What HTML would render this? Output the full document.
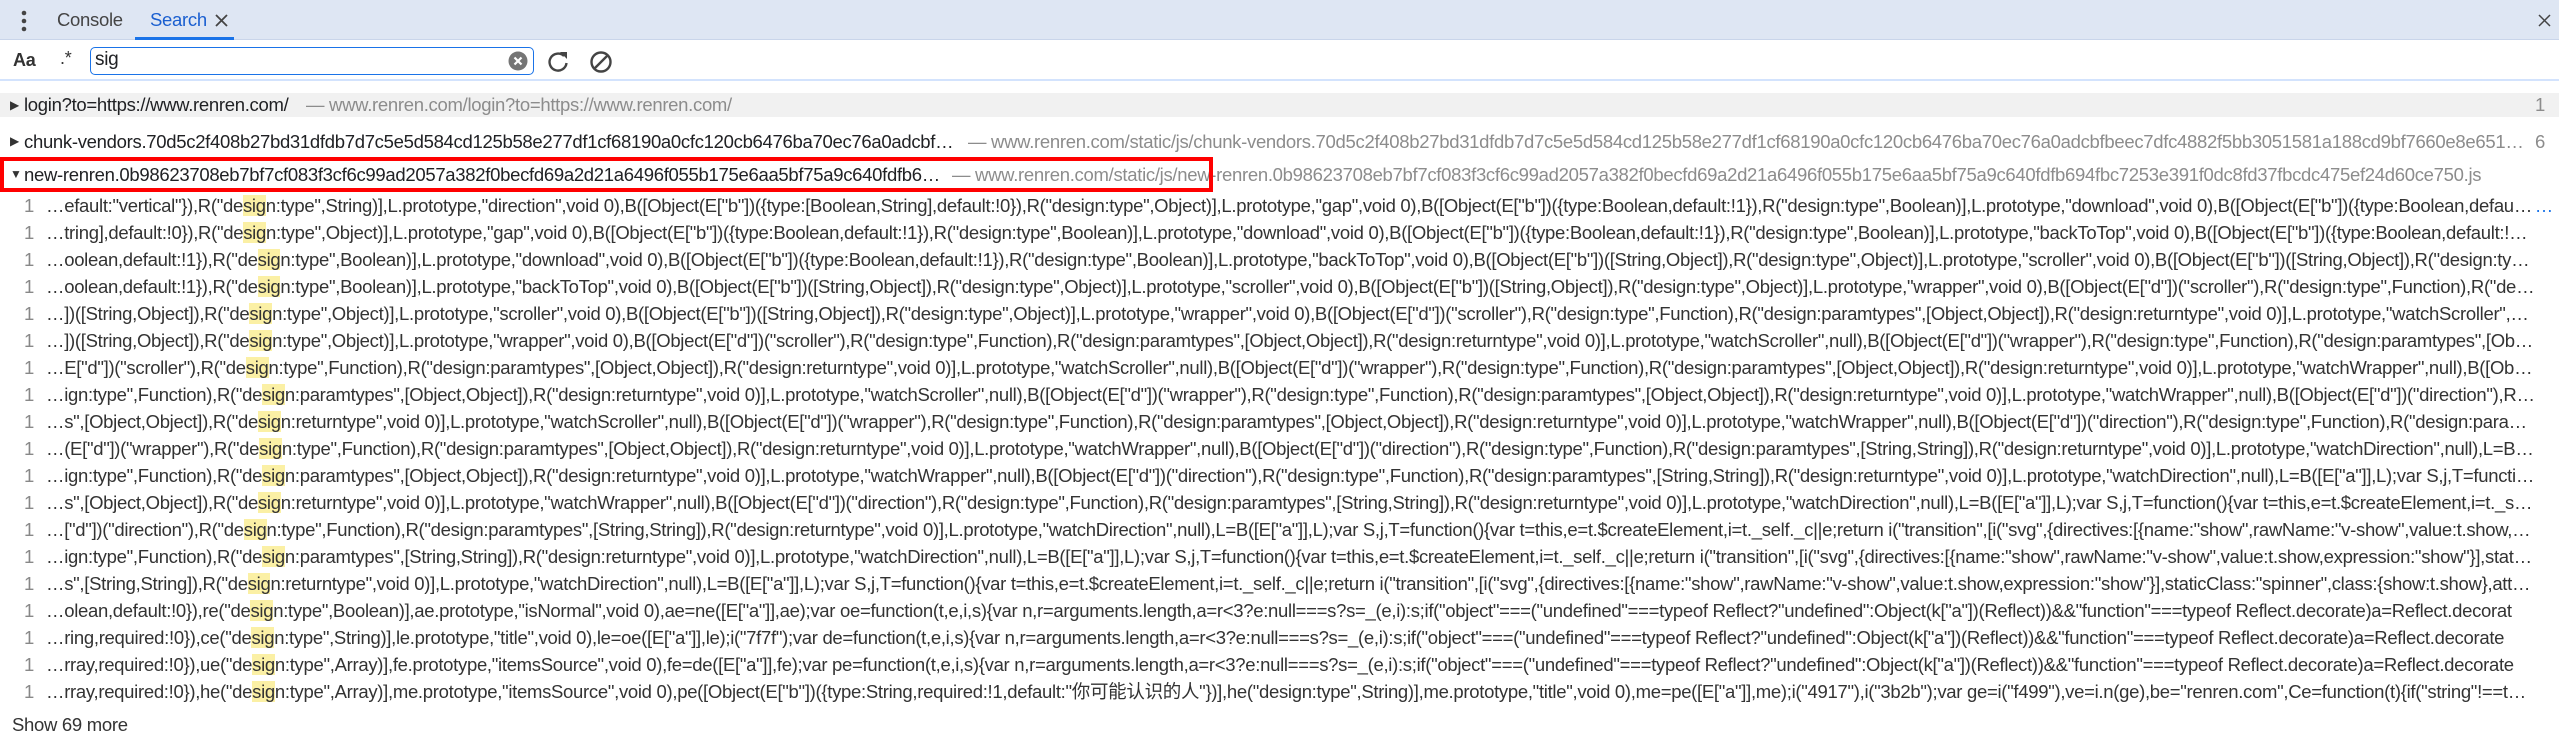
<!DOCTYPE html>
<html><head><meta charset="utf-8"><style>
*{margin:0;padding:0;box-sizing:border-box}
body{width:2559px;height:748px;overflow:hidden;background:#fff;font-family:"Liberation Sans",Arial,sans-serif;color:#202124;position:relative;letter-spacing:-0.3px}
.tabbar{position:absolute;left:0;top:0;width:2559px;height:40px;background:#dee6f3;border-bottom:1px solid #c9d5ea}
.tab{position:absolute;top:9px;font-size:18.5px;color:#444}
.sbar{position:absolute;left:0;top:40px;width:2559px;height:41px;border-bottom:2px solid #d3e3fd}
.input{position:absolute;left:90px;top:47px;width:444px;height:28px;border:1.5px solid #1a73e8;border-radius:5px;font-size:19px;padding:1px 0 0 4px}
.row{position:absolute;left:0;width:2559px;height:27px;white-space:nowrap;overflow:hidden;font-size:18.5px;line-height:27px}
.tri{position:absolute;left:10px;top:0;font-size:12px;color:#333}
.nm{position:absolute;left:24px;top:0;overflow:hidden;text-overflow:ellipsis;white-space:nowrap}
.url{position:absolute;top:0;color:#8c8c8c;overflow:hidden;text-overflow:ellipsis;white-space:nowrap}
.cnt{position:absolute;right:14px;top:0;color:#8c8c8c}
.ln{position:absolute;left:24px;color:#888}
.code{position:absolute;left:46px;right:24px;overflow:hidden;text-overflow:ellipsis;color:#333}
.code b{font-weight:normal;background:#fbf0a5}
.dots{position:absolute;right:6px;top:0;color:#1a73e8}
</style></head><body>
<div class="tabbar">
 <svg style="position:absolute;left:20px;top:10px" width="8" height="22"><circle cx="4" cy="3" r="2.3" fill="#444"/><circle cx="4" cy="11" r="2.3" fill="#444"/><circle cx="4" cy="19" r="2.3" fill="#444"/></svg>
 <div class="tab" style="left:57px">Console</div>
 <div class="tab" style="left:150px;color:#1a5fd0">Search</div>
 <div style="position:absolute;left:135px;top:37px;width:99px;height:3px;background:#1a73e8"></div>
 <svg style="position:absolute;left:215px;top:14px" width="13" height="13"><path d="M1 1L12 12M12 1L1 12" stroke="#444" stroke-width="1.8"/></svg>
 <svg style="position:absolute;left:2538px;top:14px" width="13" height="13"><path d="M1 1L12 12M12 1L1 12" stroke="#444" stroke-width="1.5"/></svg>
</div>
<div class="sbar">
 <div style="position:absolute;left:13px;top:10px;font-size:18px;font-weight:bold;color:#333">Aa</div>
 <div style="position:absolute;left:60px;top:8px;font-size:18px;color:#333">.*</div>
</div>
<div class="input">sig
 <svg style="position:absolute;right:5px;top:3px" width="20" height="20"><circle cx="10" cy="10" r="9.5" fill="#757575"/><path d="M6.5 6.5L13.5 13.5M13.5 6.5L6.5 13.5" stroke="#fff" stroke-width="2.2"/></svg>
</div>
<svg style="position:absolute;left:547px;top:49px" width="24" height="26"><path d="M17 7A8.5 8.5 0 1 0 19.5 14" fill="none" stroke="#444" stroke-width="2.4"/><path d="M13 3L20 3L20 10Z" fill="#444"/></svg>
<svg style="position:absolute;left:589px;top:50px" width="24" height="24"><circle cx="12" cy="12" r="9.5" fill="none" stroke="#444" stroke-width="2.4"/><path d="M18.5 5.5L5.5 18.5" stroke="#444" stroke-width="2.4"/></svg>

<div class="row" style="top:93px;height:24px;line-height:24px;background:#f1f1f1"><span class="tri">&#9654;</span><span class="nm" style="width:280px">login?to=https://www.renren.com/</span><span class="url" style="left:306px;width:700px">— www.renren.com/login?to=https://www.renren.com/</span><span class="cnt">1</span></div>
<div class="row" style="top:128px"><span class="tri">&#9654;</span><span class="nm" style="width:936px">chunk-vendors.70d5c2f408b27bd31dfdb7d7c5e5d584cd125b58e277df1cf68190a0cfc120cb6476ba70ec76a0adcbfbeec7dfc4882f5bb3051581a188</span><span class="url" style="left:968px;width:1560px">— www.renren.com/static/js/chunk-vendors.70d5c2f408b27bd31dfdb7d7c5e5d584cd125b58e277df1cf68190a0cfc120cb6476ba70ec76a0adcbfbeec7dfc4882f5bb3051581a188cd9bf7660e8e651b4c8a9d0e1f2a3b4c5d6e7f8</span><span class="cnt">6</span></div>
<div class="row" style="top:161px"><span class="tri">&#9660;</span><span class="nm" style="width:920px">new-renren.0b98623708eb7bf7cf083f3cf6c99ad2057a382f0becfd69a2d21a6496f055b175e6aa5bf75a9c640fdfb694fbc7253e391f0dc8fd37fbcdc475ef24d60ce750.js</span><span class="url" style="left:952px;width:1560px">— www.renren.com/static/js/new-renren.0b98623708eb7bf7cf083f3cf6c99ad2057a382f0becfd69a2d21a6496f055b175e6aa5bf75a9c640fdfb694fbc7253e391f0dc8fd37fbcdc475ef24d60ce750.js</span></div>
<div style="position:absolute;left:0;top:157px;width:1213px;height:35px;border:4px solid #f00"></div>

<div class="row" style="top:192px"><span class="ln">1</span><span class="code">…efault:"vertical"}),R("de<b>sig</b>n:type",String)],L.prototype,"direction",void 0),B([Object(E["b"])({type:[Boolean,String],default:!0}),R("design:type",Object)],L.prototype,"gap",void 0),B([Object(E["b"])({type:Boolean,default:!1}),R("design:type",Boolean)],L.prototype,"download",void 0),B([Object(E["b"])({type:Boolean,default:!1}),R("design:type",Boolean)]</span><span class="dots">…</span></div>
<div class="row" style="top:219px"><span class="ln">1</span><span class="code">…tring],default:!0}),R("de<b>sig</b>n:type",Object)],L.prototype,"gap",void 0),B([Object(E["b"])({type:Boolean,default:!1}),R("design:type",Boolean)],L.prototype,"download",void 0),B([Object(E["b"])({type:Boolean,default:!1}),R("design:type",Boolean)],L.prototype,"backToTop",void 0),B([Object(E["b"])({type:Boolean,default:!1}),R("design:type",Boolean)]</span></div>
<div class="row" style="top:246px"><span class="ln">1</span><span class="code">…oolean,default:!1}),R("de<b>sig</b>n:type",Boolean)],L.prototype,"download",void 0),B([Object(E["b"])({type:Boolean,default:!1}),R("design:type",Boolean)],L.prototype,"backToTop",void 0),B([Object(E["b"])([String,Object]),R("design:type",Object)],L.prototype,"scroller",void 0),B([Object(E["b"])([String,Object]),R("design:type",Object)]</span></div>
<div class="row" style="top:273px"><span class="ln">1</span><span class="code">…oolean,default:!1}),R("de<b>sig</b>n:type",Boolean)],L.prototype,"backToTop",void 0),B([Object(E["b"])([String,Object]),R("design:type",Object)],L.prototype,"scroller",void 0),B([Object(E["b"])([String,Object]),R("design:type",Object)],L.prototype,"wrapper",void 0),B([Object(E["d"])("scroller"),R("design:type",Function),R("design:paramtypes"</span></div>
<div class="row" style="top:300px"><span class="ln">1</span><span class="code">…])([String,Object]),R("de<b>sig</b>n:type",Object)],L.prototype,"scroller",void 0),B([Object(E["b"])([String,Object]),R("design:type",Object)],L.prototype,"wrapper",void 0),B([Object(E["d"])("scroller"),R("design:type",Function),R("design:paramtypes",[Object,Object]),R("design:returntype",void 0)],L.prototype,"watchScroller",null),B</span></div>
<div class="row" style="top:327px"><span class="ln">1</span><span class="code">…])([String,Object]),R("de<b>sig</b>n:type",Object)],L.prototype,"wrapper",void 0),B([Object(E["d"])("scroller"),R("design:type",Function),R("design:paramtypes",[Object,Object]),R("design:returntype",void 0)],L.prototype,"watchScroller",null),B([Object(E["d"])("wrapper"),R("design:type",Function),R("design:paramtypes",[Object,Object])</span></div>
<div class="row" style="top:354px"><span class="ln">1</span><span class="code">…E["d"])("scroller"),R("de<b>sig</b>n:type",Function),R("design:paramtypes",[Object,Object]),R("design:returntype",void 0)],L.prototype,"watchScroller",null),B([Object(E["d"])("wrapper"),R("design:type",Function),R("design:paramtypes",[Object,Object]),R("design:returntype",void 0)],L.prototype,"watchWrapper",null),B([Object(E["d"])</span></div>
<div class="row" style="top:381px"><span class="ln">1</span><span class="code">…ign:type",Function),R("de<b>sig</b>n:paramtypes",[Object,Object]),R("design:returntype",void 0)],L.prototype,"watchScroller",null),B([Object(E["d"])("wrapper"),R("design:type",Function),R("design:paramtypes",[Object,Object]),R("design:returntype",void 0)],L.prototype,"watchWrapper",null),B([Object(E["d"])("direction"),R("design:type"</span></div>
<div class="row" style="top:408px"><span class="ln">1</span><span class="code">…s",[Object,Object]),R("de<b>sig</b>n:returntype",void 0)],L.prototype,"watchScroller",null),B([Object(E["d"])("wrapper"),R("design:type",Function),R("design:paramtypes",[Object,Object]),R("design:returntype",void 0)],L.prototype,"watchWrapper",null),B([Object(E["d"])("direction"),R("design:type",Function),R("design:paramtypes"</span></div>
<div class="row" style="top:435px"><span class="ln">1</span><span class="code">…(E["d"])("wrapper"),R("de<b>sig</b>n:type",Function),R("design:paramtypes",[Object,Object]),R("design:returntype",void 0)],L.prototype,"watchWrapper",null),B([Object(E["d"])("direction"),R("design:type",Function),R("design:paramtypes",[String,String]),R("design:returntype",void 0)],L.prototype,"watchDirection",null),L=B([E["a"</span></div>
<div class="row" style="top:462px"><span class="ln">1</span><span class="code">…ign:type",Function),R("de<b>sig</b>n:paramtypes",[Object,Object]),R("design:returntype",void 0)],L.prototype,"watchWrapper",null),B([Object(E["d"])("direction"),R("design:type",Function),R("design:paramtypes",[String,String]),R("design:returntype",void 0)],L.prototype,"watchDirection",null),L=B([E["a"]],L);var S,j,T=function(){var t=this,e=t.$c</span></div>
<div class="row" style="top:489px"><span class="ln">1</span><span class="code">…s",[Object,Object]),R("de<b>sig</b>n:returntype",void 0)],L.prototype,"watchWrapper",null),B([Object(E["d"])("direction"),R("design:type",Function),R("design:paramtypes",[String,String]),R("design:returntype",void 0)],L.prototype,"watchDirection",null),L=B([E["a"]],L);var S,j,T=function(){var t=this,e=t.$createElement,i=t._self._c||</span></div>
<div class="row" style="top:516px"><span class="ln">1</span><span class="code">…["d"])("direction"),R("de<b>sig</b>n:type",Function),R("design:paramtypes",[String,String]),R("design:returntype",void 0)],L.prototype,"watchDirection",null),L=B([E["a"]],L);var S,j,T=function(){var t=this,e=t.$createElement,i=t._self._c||e;return i("transition",[i("svg",{directives:[{name:"show",rawName:"v-show",value:t.show,expressi</span></div>
<div class="row" style="top:543px"><span class="ln">1</span><span class="code">…ign:type",Function),R("de<b>sig</b>n:paramtypes",[String,String]),R("design:returntype",void 0)],L.prototype,"watchDirection",null),L=B([E["a"]],L);var S,j,T=function(){var t=this,e=t.$createElement,i=t._self._c||e;return i("transition",[i("svg",{directives:[{name:"show",rawName:"v-show",value:t.show,expression:"show"}],staticClass:</span></div>
<div class="row" style="top:570px"><span class="ln">1</span><span class="code">…s",[String,String]),R("de<b>sig</b>n:returntype",void 0)],L.prototype,"watchDirection",null),L=B([E["a"]],L);var S,j,T=function(){var t=this,e=t.$createElement,i=t._self._c||e;return i("transition",[i("svg",{directives:[{name:"show",rawName:"v-show",value:t.show,expression:"show"}],staticClass:"spinner",class:{show:t.show},attrs:{width</span></div>
<div class="row" style="top:597px"><span class="ln">1</span><span class="code">…olean,default:!0}),re("de<b>sig</b>n:type",Boolean)],ae.prototype,"isNormal",void 0),ae=ne([E["a"]],ae);var oe=function(t,e,i,s){var n,r=arguments.length,a=r&lt;3?e:null===s?s=_(e,i):s;if("object"===("undefined"===typeof Reflect?"undefined":Object(k["a"])(Reflect))&amp;&amp;"function"===typeof Reflect.decorate)a=Reflect.decorat</span></div>
<div class="row" style="top:624px"><span class="ln">1</span><span class="code">…ring,required:!0}),ce("de<b>sig</b>n:type",String)],le.prototype,"title",void 0),le=oe([E["a"]],le);i("7f7f");var de=function(t,e,i,s){var n,r=arguments.length,a=r&lt;3?e:null===s?s=_(e,i):s;if("object"===("undefined"===typeof Reflect?"undefined":Object(k["a"])(Reflect))&amp;&amp;"function"===typeof Reflect.decorate)a=Reflect.decorate</span></div>
<div class="row" style="top:651px"><span class="ln">1</span><span class="code">…rray,required:!0}),ue("de<b>sig</b>n:type",Array)],fe.prototype,"itemsSource",void 0),fe=de([E["a"]],fe);var pe=function(t,e,i,s){var n,r=arguments.length,a=r&lt;3?e:null===s?s=_(e,i):s;if("object"===("undefined"===typeof Reflect?"undefined":Object(k["a"])(Reflect))&amp;&amp;"function"===typeof Reflect.decorate)a=Reflect.decorate</span></div>
<div class="row" style="top:678px"><span class="ln">1</span><span class="code">…rray,required:!0}),he("de<b>sig</b>n:type",Array)],me.prototype,"itemsSource",void 0),pe([Object(E["b"])({type:String,required:!1,default:"<span style="font-family:'Liberation Sans','Noto Sans CJK SC',sans-serif">你可能认识的人</span>"})],he("design:type",String)],me.prototype,"title",void 0),me=pe([E["a"]],me);i("4917"),i("3b2b");var ge=i("f499"),ve=i.n(ge),be="renren.com",Ce=function(t){if("string"!==type</span></div>
<div style="position:absolute;left:12px;top:714px;font-size:18.5px;color:#333">Show 69 more</div>
</body></html>
